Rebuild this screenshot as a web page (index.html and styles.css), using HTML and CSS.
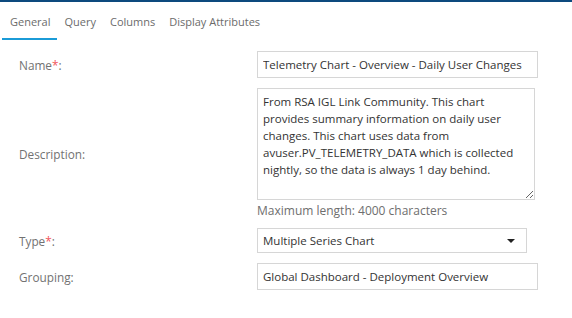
FILE: index.html
```html
<!DOCTYPE html>
<html lang="en">

<head>
    <meta charset="utf-8">
    <title>Chart Properties</title>
    <link rel="stylesheet" href="styles.css">
</head>

<body>
    <div class="topbar"></div>

    <!-- tab strip -->
    <div class="tabs">
        <a class="tab active" href="#">General</a>
        <a class="tab" href="#">Query</a>
        <a class="tab" href="#">Columns</a>
        <a class="tab" href="#">Display Attributes</a>
    </div>

    <div class="form">
        <div class="row row-name">
            <label class="label">Name<span class="req">*</span>:</label>
            <input class="field wide" type="text" value="Telemetry Chart - Overview - Daily User Changes">
        </div>

        <div class="row row-desc">
            <label class="label">Description:</label>
            <div>
                <textarea class="field area">From RSA IGL Link Community. This chart provides summary information on daily user changes. This chart uses data from avuser.PV_TELEMETRY_DATA which is collected nightly, so the data is always 1 day behind.</textarea>
                <div class="hint">Maximum length: 4000 characters</div>
            </div>
        </div>

        <div class="row row-type">
            <label class="label">Type<span class="req">*</span>:</label>
            <div class="field select">
                <span>Multiple Series Chart</span>
                <span class="caret"></span>
            </div>
        </div>

        <div class="row row-group">
            <label class="label">Grouping:</label>
            <input class="field wide" type="text" value="Global Dashboard - Deployment Overview">
        </div>
    </div>
</body>

</html>
```

FILE: styles.css
```css
html {
    background: #fff;
}

body {
    margin: 0;
    font-family: 'Open Sans', 'Noto Sans', sans-serif;
    font-size: 12px;
    color: #333;
}

.topbar {
    height: 2px;
    background: #0d4a7e;
}

.tabs {
    display: flex;
    height: 37px;
    padding-left: 2px;
}

.tab {
    display: block;
    padding: 12px 7px 0 7px;
    font-size: 11px;
    color: #6b6b6b;
    text-decoration: none;
    box-sizing: border-box;
    height: 37px;
}

.tab.active {
    padding-left: 8px;
    border-bottom: 2px solid #1b9bd7;
    height: 38px;
}

.form {
    padding-top: 12px;
}

.row {
    display: grid;
    grid-template-columns: 257px auto;
    align-items: center;
}

.label {
    padding-left: 19px;
    font-size: 11.8px;
    color: #727272;
}

.req {
    color: #f2545b;
}

.field {
    font-family: 'Open Sans', 'Noto Sans', sans-serif;
    font-size: 11.5px;
    color: #333;
    border: 1px solid #d6d6d6;
    box-sizing: border-box;
    padding: 0 5px;
    margin: 0;
    outline: none;
    background: #fff;
}

.wide {
    width: 281px;
    height: 27px;
}

.row-desc {
    margin-top: 10px;
}

.area {
    display: block;
    width: 278px;
    height: 112px;
    padding: 4px 5px;
    line-height: 17px;
    resize: both;
}

.hint {
    color: #6e6e6e;
    padding-top: 2px;
    height: 17px;
}

.row-type {
    margin-top: 9px;
}

.select {
    width: 270px;
    height: 25px;
    display: flex;
    align-items: center;
    justify-content: space-between;
    padding-right: 11px;
}

.caret {
    width: 0;
    height: 0;
    border-left: 4px solid transparent;
    border-right: 4px solid transparent;
    border-top: 4px solid #222;
}

.row-group {
    margin-top: 10px;
}
```
